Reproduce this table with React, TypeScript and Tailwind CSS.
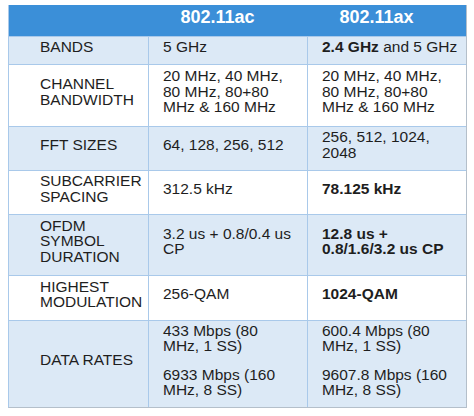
import type { ReactNode } from "react";

type Row = {
  label: ReactNode;
  ac: ReactNode;
  ax: ReactNode;
  h: string;
  shaded: boolean;
};

const rows: Row[] = [
  {
    label: "BANDS",
    ac: "5 GHz",
    ax: (
      <>
        <b>2.4 GHz</b> and 5 GHz
      </>
    ),
    h: "h-[28px]",
    shaded: true,
  },
  {
    label: (
      <>
        CHANNEL
        <br />
        BANDWIDTH
      </>
    ),
    ac: (
      <>
        20 MHz, 40 MHz,
        <br />
        80 MHz, 80+80
        <br />
        MHz &amp; 160 MHz
      </>
    ),
    ax: (
      <>
        20 MHz, 40 MHz,
        <br />
        80 MHz, 80+80
        <br />
        MHz &amp; 160 MHz
      </>
    ),
    h: "h-[62px]",
    shaded: false,
  },
  {
    label: "FFT SIZES",
    ac: "64, 128, 256, 512",
    ax: (
      <>
        256, 512, 1024,
        <br />
        2048
      </>
    ),
    h: "h-[44px]",
    shaded: true,
  },
  {
    label: (
      <>
        SUBCARRIER
        <br />
        SPACING
      </>
    ),
    ac: "312.5 kHz",
    ax: <b>78.125 kHz</b>,
    h: "h-[44px]",
    shaded: false,
  },
  {
    label: (
      <>
        OFDM
        <br />
        SYMBOL
        <br />
        DURATION
      </>
    ),
    ac: (
      <>
        3.2 us + 0.8/0.4 us
        <br />
        CP
      </>
    ),
    ax: (
      <b>
        12.8 us +
        <br />
        0.8/1.6/3.2 us CP
      </b>
    ),
    h: "h-[61px]",
    shaded: true,
  },
  {
    label: (
      <>
        HIGHEST
        <br />
        MODULATION
      </>
    ),
    ac: "256-QAM",
    ax: <b>1024-QAM</b>,
    h: "h-[45px]",
    shaded: false,
  },
  {
    label: "DATA RATES",
    ac: (
      <div className="flex flex-col gap-[13px]">
        <p>
          433 Mbps (80
          <br />
          MHz, 1 SS)
        </p>
        <p>
          6933 Mbps (160
          <br />
          MHz, 8 SS)
        </p>
      </div>
    ),
    ax: (
      <div className="flex flex-col gap-[13px]">
        <p>
          600.4 Mbps (80
          <br />
          MHz, 1 SS)
        </p>
        <p>
          9607.8 Mbps (160
          <br />
          MHz, 8 SS)
        </p>
      </div>
    ),
    h: "h-[87px]",
    shaded: true,
  },
];

export default function App() {
  return (
    <main
      className="min-h-screen bg-white pl-[8px] pt-[5px] text-[15.5px] leading-[15.5px] text-[#1e1e1e]"
      style={{ fontFamily: '"Liberation Sans", Arial, sans-serif' }}
    >
      <div className="w-[459px] border-b border-r border-[#b4bfca] border-l border-l-[#a9c9ea]">
        <div className="grid h-[31px] grid-cols-[140px_159px_159px] bg-[#3b8fd8] text-[18px] font-bold text-white">
          <div />
          <div className="flex items-center justify-center pb-[6px] pr-[22px]">802.11ac</div>
          <div className="flex items-center justify-center pb-[6px] pr-[22px]">802.11ax</div>
        </div>

        {rows.map((row, i) => (
          <div
            key={i}
            className={`grid grid-cols-[140px_159px_159px] border-t border-[#a9c9ea] ${row.h} ${
              row.shaded ? "bg-[#dce9f6]" : "bg-white"
            }`}
          >
            <div className="flex items-center border-r border-[#a9c9ea] pb-[8px] pl-[31px]">
              <div>{row.label}</div>
            </div>
            <div className="flex items-center border-r border-[#a9c9ea] pb-[8px] pl-[14px]">
              <div>{row.ac}</div>
            </div>
            <div className="flex items-center pb-[8px] pl-[14px]">
              <div>{row.ax}</div>
            </div>
          </div>
        ))}
      </div>
    </main>
  );
}
